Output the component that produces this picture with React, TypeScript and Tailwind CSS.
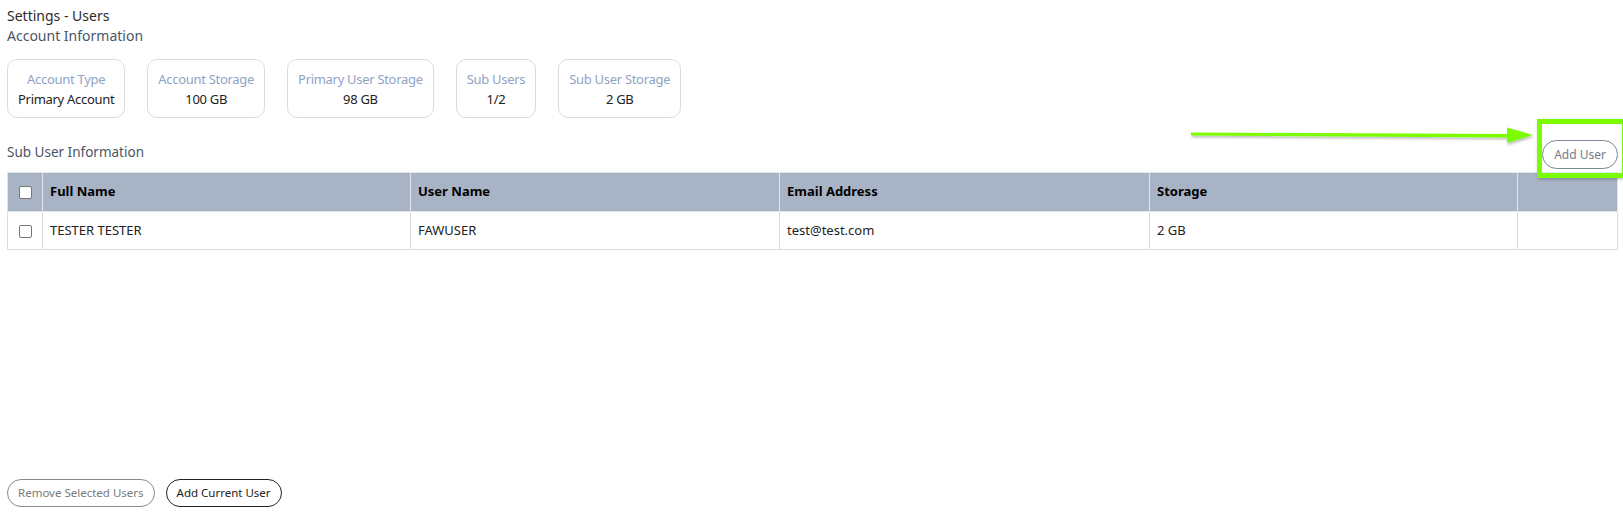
const cards = [
  { label: "Account Type", value: "Primary Account" },
  { label: "Account Storage", value: "100 GB" },
  { label: "Primary User Storage", value: "98 GB" },
  { label: "Sub Users", value: "1/2" },
  { label: "Sub User Storage", value: "2 GB" },
];

const users = [
  { fullName: "TESTER TESTER", userName: "FAWUSER", email: "test@test.com", storage: "2 GB" },
];

function Box() {
  return <span className="inline-block w-[13px] h-[13px] border border-[#767676] rounded-[2px] bg-white align-middle" />;
}

export default function App() {
  return (
    <div className="relative h-[530px] w-[1623px] flex flex-col bg-white px-[7px] pt-[6px] pb-[23px] text-[#222] font-['Noto_Sans',sans-serif] overflow-hidden">
      <p className="text-[14px] leading-[20px] text-[#2b2b2b]">Settings - Users</p>
      <p className="text-[14px] leading-[20px] text-[#4a5566]">Account Information</p>

      <div className="flex gap-[22px] mt-[13px]">
        {cards.map((c) => (
          <div
            key={c.label}
            className="h-[59px] px-[10px] flex flex-col justify-center items-center border border-[#dcdcdc] rounded-[10px] tracking-[-0.3px]"
          >
            <span className="text-[13px] leading-[20px] text-[#8fa3c4] whitespace-nowrap">{c.label}</span>
            <span className="text-[13px] leading-[20px] text-[#222] whitespace-nowrap">{c.value}</span>
          </div>
        ))}
      </div>

      <div className="flex items-end justify-between mt-[22px] mb-[3px]">
        <p className="text-[13.5px] leading-[20px] text-[#4a5566] mb-[7px]">Sub User Information</p>
        <button className="relative h-[29px] px-[11px] mr-[-2px] rounded-full border border-[#7b8594] text-[12px] text-[#737b86]">
          Add User
        </button>
      </div>

      <table className="w-[1610px] border-collapse table-fixed text-[13px]">
        <colgroup>
          <col className="w-[35px]" />
          <col className="w-[368px]" />
          <col className="w-[369px]" />
          <col className="w-[370px]" />
          <col className="w-[368px]" />
          <col className="w-[100px]" />
        </colgroup>
        <thead>
          <tr className="h-[39px] bg-[#a9b3c6]">
            <th className="border border-[#dfe3ea] text-center"><Box /></th>
            <th className="border border-[#dfe3ea] text-left font-bold px-[7px] text-black">Full Name</th>
            <th className="border border-[#dfe3ea] text-left font-bold px-[7px] text-black">User Name</th>
            <th className="border border-[#dfe3ea] text-left font-bold px-[7px] text-black">Email Address</th>
            <th className="border border-[#dfe3ea] text-left font-bold px-[7px] text-black">Storage</th>
            <th className="border border-[#dfe3ea]" />
          </tr>
        </thead>
        <tbody>
          {users.map((u) => (
            <tr key={u.userName} className="h-[38px]">
              <td className="border border-[#dcdcdc] text-center"><Box /></td>
              <td className="border border-[#dcdcdc] px-[7px]">{u.fullName}</td>
              <td className="border border-[#dcdcdc] px-[7px]">{u.userName}</td>
              <td className="border border-[#dcdcdc] px-[7px]">{u.email}</td>
              <td className="border border-[#dcdcdc] px-[7px]">{u.storage}</td>
              <td className="border border-[#dcdcdc]" />
            </tr>
          ))}
        </tbody>
      </table>

      <div className="mt-auto flex gap-[11px]">
        <button className="h-[28px] px-[10px] rounded-full border border-[#8a8a8a] text-[11.5px] text-[#7a7a7a]">
          Remove Selected Users
        </button>
        <button className="h-[28px] px-[10px] rounded-full border border-[#222] text-[11.5px] text-[#222]">
          Add Current User
        </button>
      </div>

      {/* annotation: arrow + highlight box */}
      <div className="absolute left-[1537px] top-[119px] w-[90px] h-[59px] border-[5px] border-[#7cfc00] shadow-[1px_1px_3px_rgba(0,0,0,0.3)]" />
      <svg className="absolute left-[1185px] top-[122px]" width="355" height="28" viewBox="0 0 355 28">
        <defs>
          <filter id="sh" x="-5%" y="-50%" width="110%" height="200%">
            <feDropShadow dx="1" dy="2" stdDeviation="1" floodColor="#000" floodOpacity="0.25" />
          </filter>
        </defs>
        <g filter="url(#sh)" fill="#7cfc00">
          <polygon points="6,10.5 325,12 325,15.5 6,13.5" />
          <polygon points="322,5.5 348,13 322,21" />
        </g>
      </svg>
    </div>
  );
}
